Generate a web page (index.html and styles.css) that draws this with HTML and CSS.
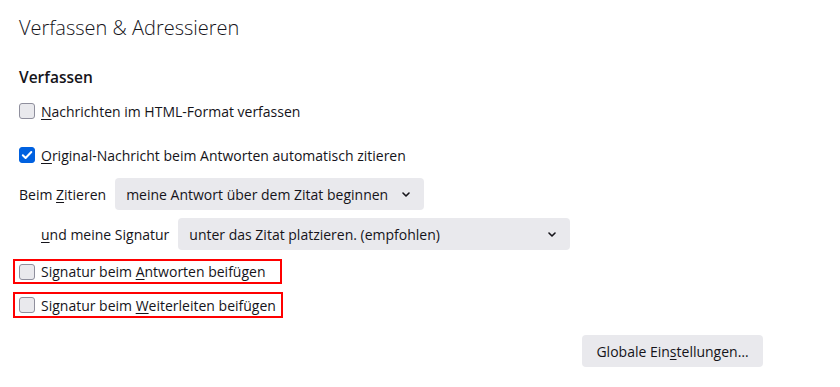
FILE: index.html
```html
<!DOCTYPE html>
<html lang="de">
<head>
    <meta charset="UTF-8">
    <meta name="viewport" content="width=device-width, initial-scale=1.0">
    <title>Verfassen &amp; Adressieren</title>
    <link rel="stylesheet" href="styles.css">
</head>
<body>
    <div class="pane">
        <h1>Verfassen &amp; Adressieren</h1>

        <h2>Verfassen</h2>

        <label class="check-row">
            <span class="box"></span>
            <span><u>N</u>achrichten im HTML-Format verfassen</span>
        </label>

        <label class="check-row check-row-second">
            <span class="box box-checked">
                <svg width="12" height="12" viewBox="0 0 12 12">
                    <path d="M1.8 6.2 L4.6 9 L10.3 3" fill="none" stroke="#fff" stroke-width="2" stroke-linecap="round" stroke-linejoin="round"/>
                </svg>
            </span>
            <span><u>O</u>riginal-Nachricht beim Antworten automatisch zitieren</span>
        </label>

        <div class="select-row">
            <span>Beim <u>Z</u>itieren</span>
            <div class="select select-reply">
                <span>meine Antwort über dem Zitat beginnen</span>
                <svg class="chevron" width="8" height="5" viewBox="0 0 8 5">
                    <path d="M1 1 L4 4 L7 1" fill="none" stroke="#15141a" stroke-width="1.6" stroke-linecap="round" stroke-linejoin="round"/>
                </svg>
            </div>
        </div>

        <div class="select-row select-row-indent">
            <span><u>u</u>nd meine Signatur</span>
            <div class="select select-signature">
                <span>unter das Zitat platzieren. (empfohlen)</span>
                <svg class="chevron" width="8" height="5" viewBox="0 0 8 5">
                    <path d="M1 1 L4 4 L7 1" fill="none" stroke="#15141a" stroke-width="1.6" stroke-linecap="round" stroke-linejoin="round"/>
                </svg>
            </div>
        </div>

        <label class="check-row marked marked-reply">
            <span class="box"></span>
            <span>Signatur beim <u>A</u>ntworten beifügen</span>
        </label>

        <label class="check-row marked marked-forward">
            <span class="box"></span>
            <span>Signatur beim <u>W</u>eiterleiten beifügen</span>
        </label>

        <div class="button-row">
            <button class="button">Globale Ein<u>s</u>tellungen…</button>
        </div>
    </div>
</body>
</html>
```

FILE: styles.css
```css
body {
    margin: 0;
    background-color: #fff;
    color: #15141a;
    font-family: "Open Sans", "Noto Sans", sans-serif;
    font-size: 14px;
    white-space: nowrap;
}

u {
    text-decoration-thickness: 1px;
    text-underline-offset: 2px;
}

h1 {
    font-size: 20px;
    font-weight: 300;
    line-height: 28px;
    margin: 14px 0 0 0;
}

h2 {
    font-size: 15.5px;
    font-weight: 600;
    line-height: 24px;
    margin: 23px 0 0 0;
}

.pane {
    width: 744px;
    padding-left: 19px;
}

.check-row {
    display: flex;
    align-items: center;
    gap: 6px;
    height: 24px;
    margin-top: 10px;
}

.check-row-second {
    margin-top: 20px;
}

.box {
    box-sizing: border-box;
    width: 16px;
    height: 16px;
    border: 1px solid #8f8f9d;
    border-radius: 3px;
    background-color: #e9e9ed;
    display: flex;
    align-items: center;
    justify-content: center;
    flex-shrink: 0;
}

.box-checked {
    border-color: #0061e0;
    background-color: #0061e0;
}

.select-row {
    display: flex;
    align-items: center;
    gap: 9px;
    margin-top: 11px;
}

.select-row-indent {
    padding-left: 22px;
    margin-top: 8px;
}

.select {
    box-sizing: border-box;
    height: 32px;
    padding: 0 14px 0 11px;
    display: flex;
    align-items: center;
    justify-content: space-between;
    background-color: #e9e9ed;
    border-radius: 4px;
}

.select-reply {
    width: 309px;
}

.select-signature {
    width: 392px;
}

.marked {
    box-sizing: border-box;
    border: 2px solid #ff0000;
    padding-left: 4px;
    margin-left: -6px;
}

.marked-reply {
    width: 269px;
    height: 25px;
    margin-top: 9px;
}

.marked-forward {
    width: 270px;
    height: 26px;
    margin-top: 8px;
}

.button-row {
    display: flex;
    justify-content: flex-end;
    margin-top: 17px;
}

.button {
    height: 32px;
    width: 181px;
    padding: 0 13px;
    border: none;
    border-radius: 4px;
    background-color: #e9e9ed;
    color: #15141a;
    font-family: inherit;
    font-size: 14px;
}
```
